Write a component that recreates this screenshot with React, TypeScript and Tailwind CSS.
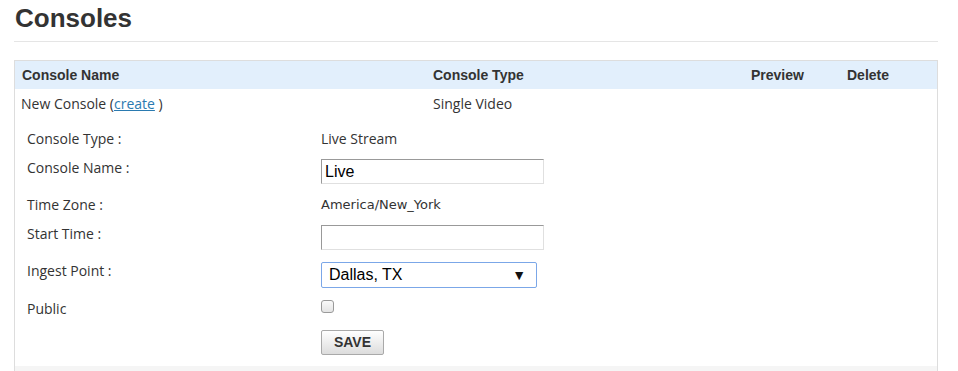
const body = "font-['Open_Sans',sans-serif] text-[14px] text-[#333]";
const arial = "font-['Liberation_Sans',Arial,sans-serif]";

function FormRow({
    label,
    children,
    className = "",
}: {
    label: string;
    children?: React.ReactNode;
    className?: string;
}) {
    return (
        <div className={`flex items-start ${className}`}>
            <div className="w-[294px] h-[20px] leading-[20px] shrink-0">{label}</div>
            <div className="flex-1">{children}</div>
        </div>
    );
}

const inputCls =
    "block w-[223px] h-[25px] mt-[1px] bg-white border border-t-[#999] border-l-[#999] border-r-[#e0e0e0] border-b-[#e0e0e0] px-[3px] text-[16px] text-black outline-none " +
    arial;

export default function App() {
    return (
        <div className={`w-[958px] h-[371px] overflow-hidden bg-white pl-[14px] ${body}`}>
            <div className="w-[924px]">
                <h1
                    className={`${arial} font-bold text-[26px] leading-[30px] text-[#333] pt-[3px] pb-[8px] pl-[1px] border-b border-[#e5e5e5]`}
                >
                    Consoles
                </h1>

                <div className="mt-[18px] border border-[#dddddd] border-b-0 h-[320px] flex flex-col">
                    <div
                        className={`grid grid-cols-[411px_318px_96px_1fr] h-[28px] pt-[1px] items-center bg-[#e2effc] ${arial} font-bold text-[14px] text-[#333]`}
                    >
                        <div className="pl-[7px]">Console Name</div>
                        <div className="pl-[7px]">Console Type</div>
                        <div className="pl-[7px]">Preview</div>
                        <div className="pl-[7px]">Delete</div>
                    </div>
                    <div className="grid grid-cols-[411px_318px_96px_1fr] h-[28px] items-center">
                        <div className="pl-[6px]">
                            New Console (
                            <a href="#" className="text-[#2a7ab0] underline">
                                create
                            </a>{" "}
                            )
                        </div>
                        <div className="pl-[7px]">Single Video</div>
                        <div />
                        <div />
                    </div>

                    <div className="pl-[12px] mt-[12px] flex flex-col">
                        <FormRow label="Console Type :">
                            <div className="h-[20px] leading-[20px]">Live Stream</div>
                        </FormRow>
                        <FormRow label="Console Name :" className="mt-[9px]">
                            <input className={inputCls} defaultValue="Live" />
                        </FormRow>
                        <FormRow label="Time Zone :" className="mt-[11px]">
                            <div className="h-[20px] leading-[20px] font-['DejaVu_Sans',sans-serif] text-[13px] text-[#333]">
                                America/New_York
                            </div>
                        </FormRow>
                        <FormRow label="Start Time :" className="mt-[9px]">
                            <input className={inputCls} defaultValue="" />
                        </FormRow>
                        <FormRow label="Ingest Point :" className="mt-[11px]">
                            <div
                                className={`mt-[1px] w-[216px] h-[26px] flex items-center justify-between border border-[#7ba7e8] rounded-[2px] bg-white pl-[7px] pr-[10px] text-[16px] text-black ${arial}`}
                            >
                                <span>Dallas, TX</span>
                                <span className="text-[14px] text-[#111]">▼</span>
                            </div>
                        </FormRow>
                        <FormRow label="Public" className="mt-[11px]">
                            <div className="mt-[1px] w-[13px] h-[13px] rounded-[3px] border border-[#9a9a9a] bg-gradient-to-b from-[#fafafa] to-[#e4e4e4]" />
                        </FormRow>
                        <div className="pl-[294px] mt-[11px]">
                            <button
                                className={`w-[63px] h-[25px] rounded-[2px] border border-[#a9a9a9] bg-gradient-to-b from-[#ffffff] to-[#dcdcdc] ${arial} font-bold text-[14px] text-[#333]`}
                            >
                                SAVE
                            </button>
                        </div>
                    </div>

                    <div className="mt-[11px] flex-1 bg-[#f5f5f5]" />
                </div>
            </div>
        </div>
    );
}
